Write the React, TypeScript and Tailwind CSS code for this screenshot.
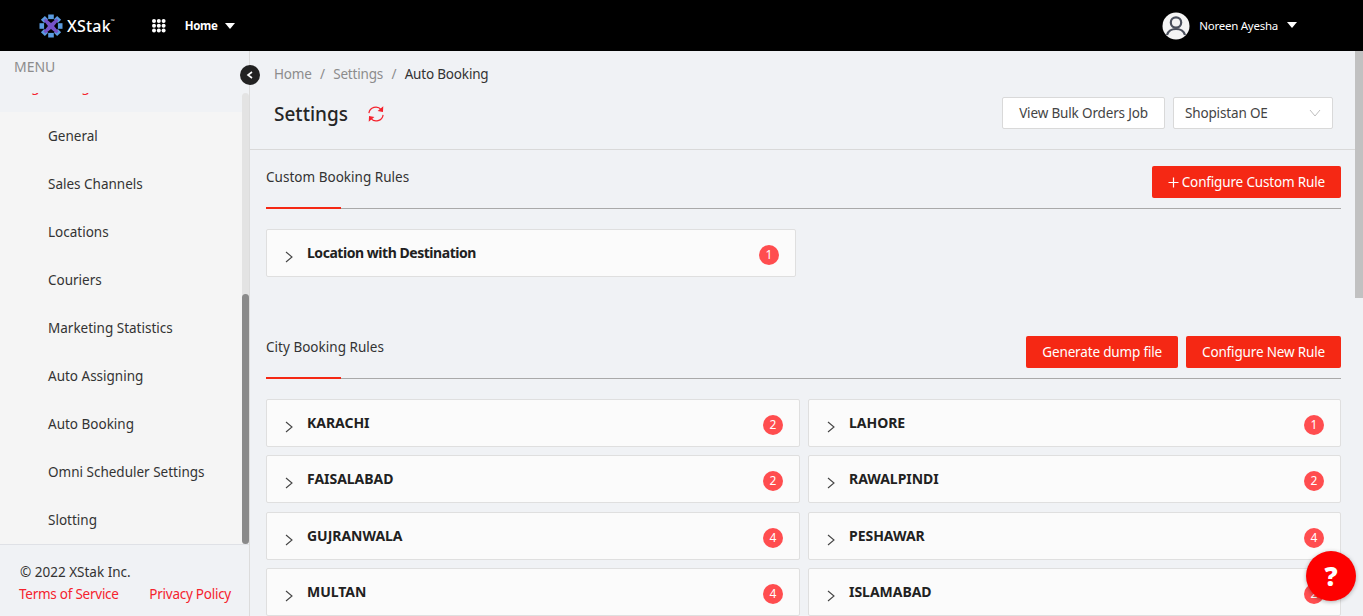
import React from "react";

const font = { fontFamily: '"Noto Sans", sans-serif' };

function Logo() {
  const angles = [0, 45, 90, 135, 180, 225, 270, 315];
  return (
    <svg width="24" height="24" viewBox="0 0 24 24">
      <g fill="#5b9be0">
        {angles.map((a) => (
          <rect key={a} x="9.2" y="0.5" width="5.6" height="4.6" transform={`rotate(${a} 12 12)`} />
        ))}
      </g>
      <path d="M6.5 4.5 12 9 17.5 4.5 19.5 6.5 15 12 19.5 17.5 17.5 19.5 12 15 6.5 19.5 4.5 17.5 9 12 4.5 6.5Z" fill="#7652c8" />
    </svg>
  );
}

function GridDots() {
  const pts = [2, 6.8, 11.6];
  return (
    <svg width="14" height="14" viewBox="0 0 14 14" fill="#fff">
      {pts.map((y) => pts.map((x) => <circle key={`${x}-${y}`} cx={x} cy={y} r="2" />))}
    </svg>
  );
}

function Caret({ className }: { className: string }) {
  return (
    <svg className={className} width="10" height="6" viewBox="0 0 10 6" fill="#fff">
      <path d="M0 0H10L5 6Z" />
    </svg>
  );
}

function Chevron() {
  return (
    <svg className="mt-[3px] shrink-0" width="10" height="12" viewBox="0 0 10 12" fill="none" stroke="#444" strokeWidth="1.1">
      <path d="M2 1 8 6 2 11" />
    </svg>
  );
}

function Rule({ name, count, mixed = false }: { name: string; count: number; mixed?: boolean }) {
  return (
    <div className="flex h-[48px] items-start rounded-[2px] border border-[#dfdfdf] bg-[#fbfbfb] pl-[17px] pr-[16px] pt-[14px]">
      <div className="mt-[4px]">
        <Chevron />
      </div>
      <div className={`-mt-[1px] ml-[13px] flex-1 text-[14px] leading-[19px] font-bold text-[#212121] ${mixed ? "tracking-[-0.46px]" : "tracking-[-0.03px]"}`}>{name}</div>
      <div className="mt-[1px] flex h-[20px] w-[20px] items-center justify-center rounded-full bg-[#ff4d4f] text-[12px] text-white">{count}</div>
    </div>
  );
}

function RedButton({ children }: { children: React.ReactNode }) {
  return (
    <button className="flex h-[32px] items-center rounded-[2px] bg-[#f52814] px-[16px] text-[13.5px] tracking-[-0.16px] text-white">{children}</button>
  );
}

function SectionHead({ title, children, className }: { title: string; children: React.ReactNode; className: string }) {
  return (
    <div className={`${className} relative flex h-[44px] items-start justify-between border-b border-[#a9a9a9]`}>
      <div className="mt-[2px] text-[13.5px] leading-[20px] tracking-[0.02px] text-[#333]">{title}</div>
      <div className="mt-[1px] flex gap-[8px]">{children}</div>
      <div className="absolute bottom-[-1px] left-0 h-[2px] w-[75px] bg-[#f52814]" />
    </div>
  );
}

const cities: [string, number, string, number][] = [
  ["KARACHI", 2, "LAHORE", 1],
  ["FAISALABAD", 2, "RAWALPINDI", 2],
  ["GUJRANWALA", 4, "PESHAWAR", 4],
  ["MULTAN", 4, "ISLAMABAD", 2],
];

const menu = ["General", "Sales Channels", "Locations", "Couriers", "Marketing Statistics", "Auto Assigning", "Auto Booking", "Omni Scheduler Settings", "Slotting"];

export default function App() {
  return (
    <div style={font} className="flex h-screen flex-col overflow-hidden bg-[#f0f2f5]">
      <header className="flex h-[51px] shrink-0 items-center bg-black text-white">
        <div className="ml-[39px] flex items-center">
          <Logo />
          <span className="ml-[4px] text-[16px] font-medium leading-none tracking-[0.2px]">XStak</span>
          <span className="mb-[8px] text-[5px] leading-none">™</span>
        </div>
        <div className="ml-[37px]">
          <GridDots />
        </div>
        <span className="ml-[19px] text-[11.5px] font-bold tracking-[-0.3px]">Home</span>
        <Caret className="ml-[7px]" />
        <div className="ml-auto mr-[66px] flex items-center">
          <svg width="28" height="28" viewBox="0 0 28 28">
            <circle cx="14" cy="14" r="13.5" fill="#f4f4f4" />
            <circle cx="14" cy="10.5" r="5.2" fill="none" stroke="#4a4f5c" strokeWidth="2.2" />
            <path d="M5 23C6.5 17.5 10 17 14 17S21.5 17.5 23 23" fill="none" stroke="#4a4f5c" strokeWidth="2.2" />
          </svg>
          <span className="ml-[9px] text-[11.5px] tracking-[-0.25px]">Noreen Ayesha</span>
          <Caret className="ml-[9px] mb-[2px]" />
        </div>
      </header>

      <div className="flex min-h-0 flex-1">
        <aside className="relative flex w-[250px] shrink-0 flex-col border-r border-[#dcdcdc] bg-[#f0f2f5]">
          <div className="h-[42px] shrink-0 pl-[14px] pt-[6px] text-[14px] leading-[20px] text-[#8c8c8c]">MENU</div>
          <div className="relative min-h-0 flex-1 overflow-hidden">
            <div className="-mt-[17px] mb-[16px] h-[20px] whitespace-nowrap pl-[22px] text-[14px] leading-[20px] text-[#f5222d]">Ag Settings</div>
            <div className="bg-[#f5f5f5]">
              {menu.map((m) => (
                <div key={m} className="flex h-[48px] items-center pl-[48px] text-[13.5px] text-[#333]">{m}</div>
              ))}
            </div>
            <div className="absolute inset-y-0 right-0 w-[7px] rounded-full bg-[#e3e3e3]" />
            <div className="absolute bottom-0 right-0 h-[250px] w-[7px] rounded-full bg-[#8a8a8a]" />
          </div>
          <div className="h-[72px] shrink-0 border-t border-[#dfe1e6] pl-[20px] pr-[18px] pt-[16px] text-[13.5px] leading-[22px]">
            <div className="text-[#333]">© 2022 XStak Inc.</div>
            <div className="-ml-[1px] flex justify-between tracking-[-0.25px] text-[#f5222d]">
              <span>Terms of Service</span>
              <span>Privacy Policy</span>
            </div>
          </div>
          <div className="absolute right-[-11px] top-[14px] flex h-[20px] w-[20px] items-center justify-center rounded-full bg-[#222]">
            <svg width="8" height="8" viewBox="0 0 8 8" fill="none" stroke="#fff" strokeWidth="1.6">
              <path d="M6 1 2 4 6 7" />
            </svg>
          </div>
        </aside>

        <main className="relative min-w-0 flex-1 overflow-hidden">
          <div className="absolute inset-y-0 right-0 w-[8px] bg-[#f0f2f5]">
            <div className="h-[247px] w-full bg-[#c1c1c1]" />
          </div>
          <div className="h-[99px] border-b border-[#d9d9d9] pl-[24px] pr-[30px]">
            <div className="pt-[13px] text-[13.5px] leading-[20px] tracking-[-0.18px] text-[#8c8c8c]">
              Home <span className="mx-[5px]">/</span> Settings <span className="mx-[5px]">/</span> <span className="text-[#333]">Auto Booking</span>
            </div>
            <div className="mt-[13px] flex items-start">
              <h1 className="mt-[3px] text-[19px] leading-[28px] font-medium text-[#262626]">Settings</h1>
              <svg className="ml-[20px] mt-[9px]" width="16" height="16" viewBox="0 0 16 16" fill="none" stroke="#f5222d" strokeWidth="1.2">
                <path d="M0.9 7.2A7 7 0 0 1 13.2 3.6" />
                <path d="M15.1 8.8A7 7 0 0 1 2.8 12.4" />
                <path d="M14.6 1.6 14.4 5.2 11 4.6Z" fill="#f5222d" />
                <path d="M1.4 14.4 1.6 10.8 5 11.4Z" fill="#f5222d" />
              </svg>
              <button className="ml-auto flex h-[32px] items-center rounded-[2px] border border-[#d9d9d9] bg-white px-[16px] text-[13.5px] tracking-[-0.15px] text-[#444]">View Bulk Orders Job</button>
              <div className="ml-[8px] flex h-[32px] w-[160px] items-center justify-between rounded-[2px] border border-[#d9d9d9] bg-white pl-[11px] pr-[11px] text-[13.5px] tracking-[-0.15px] text-[#444]">
                <span>Shopistan OE</span>
                <svg width="12" height="8" viewBox="0 0 12 8" fill="none" stroke="#bfbfbf" strokeWidth="1">
                  <path d="M1 1 6 7 11 1" />
                </svg>
              </div>
            </div>
          </div>

          <div className="pl-[16px] pr-[22px]">
            <SectionHead title="Custom Booking Rules" className="mt-[15px]">
              <RedButton>
                <svg className="mr-[3px]" width="11" height="11" viewBox="0 0 11 11" stroke="#fff" strokeWidth="1.2">
                  <path d="M5.5 0.5V10.5M0.5 5.5H10.5" />
                </svg>
                Configure Custom Rule
              </RedButton>
            </SectionHead>
            <div className="mt-[20px] w-[530px]">
              <Rule name="Location with Destination" count={1} mixed />
            </div>

            <SectionHead title="City Booking Rules" className="mt-[58px]">
              <RedButton>Generate dump file</RedButton>
              <RedButton>Configure New Rule</RedButton>
            </SectionHead>
            <div className="mt-[20px] grid grid-cols-[534px_533px] gap-x-[8px] gap-y-[8.4px]">
              {cities.map(([a, ac, b, bc]) => (
                <React.Fragment key={a}>
                  <Rule name={a} count={ac} />
                  <Rule name={b} count={bc} />
                </React.Fragment>
              ))}
            </div>
          </div>

          <div className="absolute bottom-[15px] right-[7px] flex h-[50px] w-[50px] items-center justify-center rounded-full bg-[#fe0000] text-[26px] font-black text-white shadow-[0_1px_4px_rgba(0,0,0,0.3)]">?</div>
        </main>
      </div>
    </div>
  );
}
